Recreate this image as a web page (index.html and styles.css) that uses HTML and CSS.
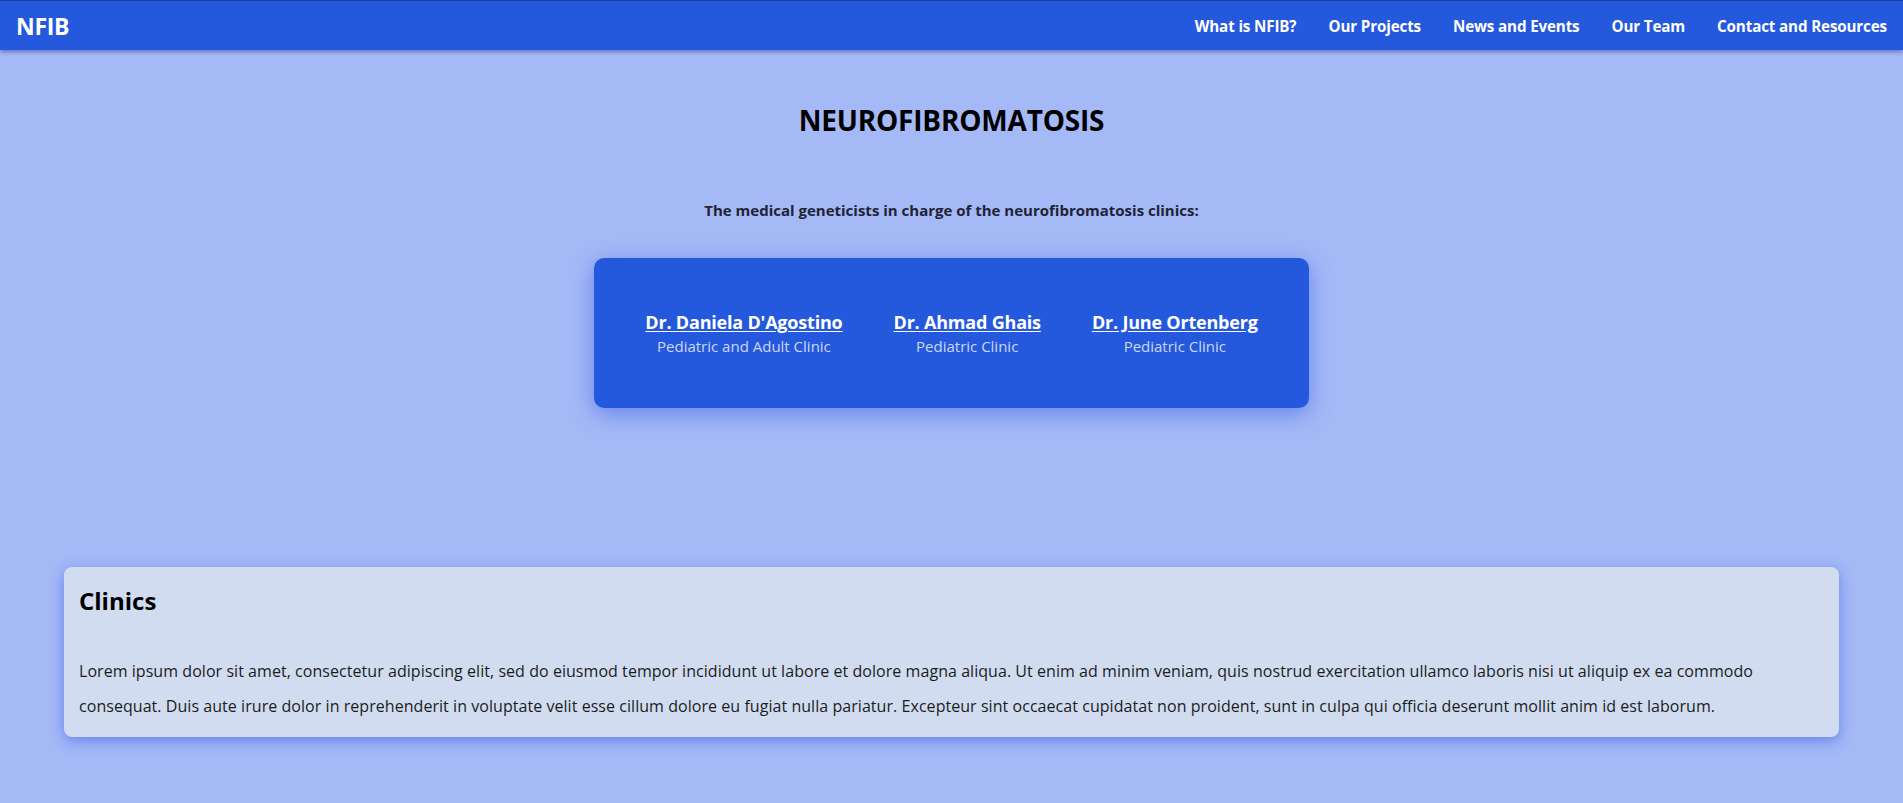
FILE: index.html
```html
<!DOCTYPE html>
<html lang="en">
<head>
<meta charset="utf-8">
<title>NFIB</title>
<link rel="stylesheet" href="styles.css">
</head>
<body>
<nav class="topbar">
  <a class="brand" href="#">NFIB</a>
  <ul class="menu">
    <li><a href="#">What is NFIB?</a></li>
    <li><a href="#">Our Projects</a></li>
    <li><a href="#">News and Events</a></li>
    <li><a href="#">Our Team</a></li>
    <li><a href="#">Contact and Resources</a></li>
  </ul>
</nav>
<main class="page">
  <h1 class="title">NEUROFIBROMATOSIS</h1>
  <p class="lead">The medical geneticists in charge of the neurofibromatosis clinics:</p>
  <section class="doctors">
    <div class="doctor">
      <a class="doctor-name" href="#">Dr. Daniela D'Agostino</a>
      <span class="doctor-role">Pediatric and Adult Clinic</span>
    </div>
    <div class="doctor">
      <a class="doctor-name" href="#">Dr. Ahmad Ghais</a>
      <span class="doctor-role">Pediatric Clinic</span>
    </div>
    <div class="doctor">
      <a class="doctor-name" href="#">Dr. June Ortenberg</a>
      <span class="doctor-role">Pediatric Clinic</span>
    </div>
  </section>
  <section class="panel">
    <h2 class="panel-title">Clinics</h2>
    <p class="panel-text">Lorem ipsum dolor sit amet, consectetur adipiscing elit, sed do eiusmod tempor incididunt ut labore et dolore magna aliqua. Ut enim ad minim veniam, quis nostrud exercitation ullamco laboris nisi ut aliquip ex ea commodo consequat. Duis aute irure dolor in reprehenderit in voluptate velit esse cillum dolore eu fugiat nulla pariatur. Excepteur sint occaecat cupidatat non proident, sunt in culpa qui officia deserunt mollit anim id est laborum.</p>
  </section>
</main>
</body>
</html>
```
FILE: styles.css
```css
* { box-sizing: border-box; }
html, body { margin: 0; padding: 0; }
body {
  background: #a5b9f7;
  font-family: "Open Sans", "Noto Sans", sans-serif;
  color: #000;
  min-height: 803px;
}
.topbar {
  height: 50px;
  background: #2459dd;
  border-top: 1px solid #1b3f9e;
  display: flex;
  align-items: center;
  justify-content: space-between;
  padding: 0 16px 0 16px;
  box-shadow: 0 2px 4px rgba(20, 40, 120, 0.45);
  position: relative;
}
.brand {
  color: #fff;
  font-weight: 700;
  font-size: 23px;
  text-decoration: none;
  letter-spacing: -0.3px;
}
.menu {
  list-style: none;
  margin: 0;
  padding: 0;
  display: flex;
  gap: 32px;
}
.menu a {
  color: #fff;
  font-weight: 700;
  font-size: 15.2px;
  letter-spacing: -0.15px;
  text-decoration: none;
}
.page {
  display: flex;
  flex-direction: column;
  align-items: center;
}
.title {
  margin: 50px 0 0 0;
  font-size: 28px;
  line-height: 40px;
  font-weight: 700;
  letter-spacing: -0.2px;
}
.lead {
  margin: 58px 0 0 0;
  font-size: 15px;
  line-height: 24px;
  font-weight: 700;
  color: #1f2333;
}
.doctors {
  margin-top: 36px;
  height: 150px;
  background: #2459dd;
  border-radius: 10px;
  padding: 0 51px;
  display: flex;
  align-items: center;
  justify-content: center;
  gap: 51px;
  box-shadow: 0 6px 22px rgba(50, 90, 230, 0.55);
}
.doctor {
  display: flex;
  flex-direction: column;
  align-items: center;
  padding-top: 1px;
}
.doctor-name {
  color: #fff;
  font-weight: 700;
  font-size: 18px;
  line-height: 25px;
  letter-spacing: -0.2px;
  text-decoration: underline;
  text-underline-offset: 2px;
}
.doctor-role {
  color: #cdd6f4;
  font-size: 15px;
  line-height: 22px;
}
.panel {
  align-self: stretch;
  margin: 159px 64px 0 64px;
  background: #d1dcf0;
  border-radius: 8px;
  padding: 18px 15px 13px 15px;
  box-shadow: 0 4px 14px rgba(50, 90, 230, 0.55);
}
.panel-title {
  margin: 0;
  font-size: 24px;
  line-height: 32px;
  font-weight: 700;
}
.panel-text {
  margin: 37px 0 0 0;
  font-size: 16px;
  line-height: 35px;
  letter-spacing: 0.05px;
  color: #1c1c1c;
}
```
